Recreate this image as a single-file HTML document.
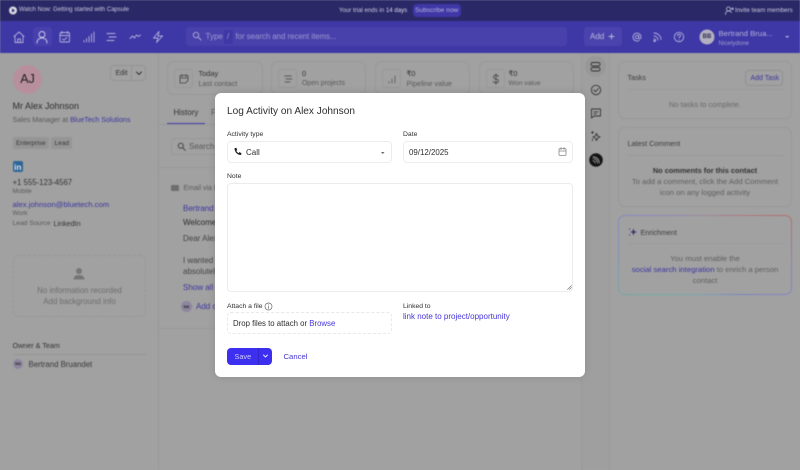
<!DOCTYPE html>
<html><head><meta charset="utf-8"><style>
html,body{margin:0;padding:0}
body{width:800px;height:470px;overflow:hidden;position:relative;background:#a1a1a1;font-family:"Liberation Sans",sans-serif;color:#333}
.t{position:absolute;white-space:nowrap;font-size:8px;line-height:11px}
.b{position:absolute;box-sizing:border-box}
.l{color:#3c35a0}
.g{color:#5a5a5a}
#bg{position:absolute;left:0;top:0;width:800px;height:470px;filter:blur(.5px)}
svg{position:absolute;fill:none;stroke-linecap:round;stroke-linejoin:round}
.card{position:absolute;box-sizing:border-box;border:1px solid #999;border-radius:7px}
.ic{position:absolute;box-sizing:border-box;border:1px solid #999;border-radius:4px;width:19px;height:19px;left:6px;top:7px}
#m{position:absolute;left:215px;top:93px;width:370px;height:284px;background:#fff;border-radius:6px;box-shadow:0 0 8px rgba(0,0,0,.12)}
#mi{position:absolute;left:0;top:0;width:370px;height:284px;filter:blur(.3px)}
#m .t{color:#2e2e2e}
.f{position:absolute;box-sizing:border-box;border:1px solid #ececef;border-radius:4px;background:#fff}
</style></head><body>
<div id="bg">
<div class="b" style="left:0;top:0;width:800px;height:21px;background:#2b2868"></div>
<div class="b" style="left:0;top:21px;width:800px;height:32px;background:#3e37a6"></div>
<div class="b" style="left:33px;top:27px;width:19px;height:19px;background:#4740ad;border-radius:3px"></div>
<svg style="left:9px;top:6px" width="9" height="9"><circle cx="4" cy="4.500" r="4" fill="#d8d8e0"/><path d="M3 2.500l3 2-3 2z" fill="#2b2868"/></svg>
<div class="t" style="left:19px;top:5px;font-size:6.050px;color:#c9c9dc">Watch Now: Getting started with Capsule</div>
<div class="t" style="left:339px;top:5px;font-size:6.100px;color:#c9c9dc">Your trial ends in <span style="color:#dcdcea">14 days</span></div>
<div class="b" style="left:413px;top:4px;width:48px;height:13px;border-radius:4px;background:#3f37a6"></div>
<div class="t" style="left:415px;top:5px;font-size:6.600px;color:#b9b7de">Subscribe now</div>
<svg style="left:725px;top:6px" width="10" height="10" stroke="#c3c3d8" stroke-width=".8"><circle cx="3.500" cy="3" r="2"/><path d="M.5 8.500c0-2.500 1.500-3.500 3-3.500s2.500.5 3 1.500M7.500 1.500v2.500M6.300 2.800h2.400"/></svg>
<div class="t" style="left:735px;top:5px;font-size:6.200px;color:#c9c9dc">Invite team members</div>

<svg style="left:12px;top:29px" width="160" height="16" stroke="#b4b2dc" stroke-width=".9">
<path d="M2 7.500l5-4.500 5 4.500M3 7v6.500h8V7M5.700 13.500v-3.500h2.600v3.500"/>
<circle cx="30" cy="5.500" r="3" stroke="#d2d2ec"/><path d="M25 14c0-3.500 2.200-5 5-5s5 1.500 5 5" stroke="#d2d2ec"/>
<rect x="48" y="3.500" width="9.500" height="9.500" rx="1"/><path d="M48 6.500h9.500M50 2.500v2M55.500 2.500v2M50.500 10l1.500 1.200 2.800-2.700"/>
<path d="M72 13v-1.500M74.500 13v-3.500M77 13v-5.500M79.500 13v-8M82 13V3"/>
<path d="M95 4.500h8M97 8h7M95 11.500h7"/>
<path d="M118 9.500l2.500-2.500 2 2 2-3 2 1.500 2-1.500"/>
<path d="M147 2.500l-5.500 6.500h4.500l-1.500 4.500 6-6.500h-4.500z"/>
</svg>
<div class="b" style="left:186px;top:27px;width:381px;height:19px;border-radius:3px;background:#4841ab"></div>
<div class="b" style="left:224px;top:30px;width:9px;height:14px;border-radius:2px;background:#3e37a6"></div>
<svg style="left:192px;top:31px" width="10" height="10" stroke="#b0aed8" stroke-width=".9"><circle cx="4" cy="4" r="2.700"/><path d="M6 6l3 3"/></svg>
<div class="t" style="left:205.500px;top:31px;font-size:8px;color:#9e9bd0">Type</div>
<div class="t" style="left:227px;top:31px;font-size:8px;color:#9e9bd0">/</div>
<div class="t" style="left:235.500px;top:31px;font-size:7.800px;color:#9e9bd0">for search and recent items...</div>
<div class="b" style="left:584px;top:27px;width:38px;height:19px;border-radius:3px;background:#4a43ae"></div>
<div class="t" style="left:590px;top:31px;font-size:8px;color:#bdbcdc">Add</div>
<svg style="left:607px;top:32px" width="9" height="9" stroke="#bdbcdc" stroke-width=".9"><path d="M4.500 2v5M2 4.500h5"/></svg>
<svg style="left:630px;top:29px" width="66" height="16" stroke="#b4b2dc" stroke-width=".9">
<circle cx="7" cy="8" r="1.700"/><path d="M8.700 6.200v2.600c0 1.400 2.300 1.400 2.300-.8a4 4 0 1 0-1.800 3.400"/>
<path d="M24 4c3.500 0 7 3 7 6.500M24 7c2 0 4 1.800 4 4M24 10c1 0 1.700.8 1.700 1.700"/><circle cx="24.500" cy="12" r=".7"/>
<circle cx="49" cy="8" r="4.700"/><path d="M47.500 6.700c0-2 3-2 3 0 0 1-1.500 1.100-1.500 2.300"/><path d="M49 10.800v.1"/>
</svg>
<svg style="left:699px;top:29px" width="16" height="16"><circle cx="8" cy="8" r="7.500" fill="#b3afc0"/></svg>
<div class="t" style="left:699px;top:32.500px;width:16px;text-align:center;font-size:6px;font-weight:bold;color:#2f2f4d;line-height:9px">BB</div>
<div class="t" style="left:718.500px;top:28px;font-size:7.700px;color:#b4b3da">Bertrand Brua...</div>
<div class="t" style="left:718.500px;top:37.500px;font-size:6.200px;color:#a09ed0">Nicelydone</div>
<svg style="left:784px;top:35px" width="7" height="4"><path d="M1 1h4.500l-2.250 2z" fill="#b0aed8"/></svg>

<div class="b" style="left:158px;top:53px;width:1px;height:417px;background:#999"></div>
<div class="b" style="left:581px;top:53px;width:29px;height:417px;background:#9f9f9f;border-left:1px solid #999;border-right:1px solid #999"></div>

<svg style="left:13px;top:65px" width="29" height="29"><circle cx="14.500" cy="14.500" r="14.500" fill="#b88f9d"/></svg>
<div class="t" style="left:13px;top:72px;width:29px;text-align:center;font-size:12.500px;line-height:15px;color:#222">AJ</div>
<div class="b" style="left:110px;top:65px;width:36px;height:16px;border:1px solid #949494;border-radius:4px"></div>
<div class="b" style="left:131px;top:65px;width:1px;height:16px;background:#949494"></div>
<div class="t" style="left:115.500px;top:67.500px;font-size:7px;color:#333">Edit</div>
<svg style="left:135px;top:71px" width="8" height="5" stroke="#333" stroke-width="1"><path d="M1.500 1l2.500 2.500L6.500 1"/></svg>
<div class="t" style="left:12.500px;top:100px;font-size:9px;line-height:12px;color:#2e2e2e">Mr Alex Johnson</div>
<div class="t g" style="left:12.500px;top:115px;font-size:7.100px">Sales Manager at <span class="l">BlueTech Solutions</span></div>
<div class="b" style="left:13px;top:137px;width:36px;height:12px;background:#959595;border-radius:2px"></div>
<div class="b" style="left:51px;top:137px;width:21px;height:12px;background:#959595;border-radius:2px"></div>
<div class="t" style="left:16px;top:137.500px;font-size:6.500px;color:#3a3a3a">Enterprise</div>
<div class="t" style="left:54.500px;top:137.500px;font-size:6.500px;color:#3a3a3a">Lead</div>
<div class="b" style="left:13px;top:161px;width:10px;height:11px;border-radius:2px;background:#2e6596"></div>
<div class="t" style="left:14px;top:162px;font-size:8.500px;line-height:10px;font-weight:bold;color:#d8e0ea">in</div>
<div class="t" style="left:12.500px;top:177px;font-size:7.800px;color:#333">+1 555-123-4567</div>
<div class="t g" style="left:12.500px;top:186px;font-size:6.500px">Mobile</div>
<div class="t l" style="left:12.500px;top:199px;font-size:7.700px">alex.johnson@bluetech.com</div>
<div class="t g" style="left:12.500px;top:208px;font-size:6.500px">Work</div>
<div class="t g" style="left:12.500px;top:218px;font-size:6.700px">Lead Source</div>
<div class="t" style="left:53.500px;top:218px;font-size:7.200px;color:#333">LinkedIn</div>
<div class="b" style="left:13px;top:255px;width:133px;height:62px;border:1px dashed #979797;border-radius:5px"></div>
<svg style="left:72px;top:267px" width="14" height="14"><circle cx="7" cy="4" r="3" fill="#767676"/><path d="M1.500 12.500c0-3 2.500-4.500 5.500-4.500s5.500 1.500 5.500 4.500z" fill="#767676"/></svg>
<div class="t" style="left:13px;top:285px;width:133px;text-align:center;font-size:7.900px;color:#6d6d6d">No information recorded</div>
<div class="t" style="left:13px;top:296px;width:133px;text-align:center;font-size:7.900px;color:#6d6d6d">Add background info</div>
<div class="t" style="left:12.500px;top:340px;font-size:7.200px;color:#333">Owner &amp; Team</div>
<div class="b" style="left:13px;top:354px;width:133px;height:1px;background:#959595"></div>
<svg style="left:13px;top:359px" width="10" height="10"><circle cx="5" cy="5" r="5" fill="#8e859e"/></svg>
<div class="t" style="left:13px;top:360px;width:10px;text-align:center;font-size:4px;line-height:8px;font-weight:bold;color:#333">BB</div>
<div class="t" style="left:28.500px;top:358.500px;font-size:7.800px;color:#3a3a3a">Bertrand Bruandet</div>

<div class="card" style="left:167px;top:61px;width:96px;height:34px"><div class="ic"></div></div>
<div class="card" style="left:271px;top:61px;width:95px;height:34px"><div class="ic"></div></div>
<div class="card" style="left:375px;top:61px;width:95px;height:34px"><div class="ic"></div></div>
<div class="card" style="left:479px;top:61px;width:95px;height:34px"><div class="ic"></div></div>
<svg style="left:178px;top:73px" width="12" height="12" stroke="#444" stroke-width=".8"><path d="M2 2.500h8v5l-2.500 2.500H2zM2 5h8M4 1.500v2M8 1.500v2"/></svg>
<svg style="left:282px;top:73px" width="12" height="12" stroke="#444" stroke-width=".8"><path d="M2.500 3h7M4 6h6M3 9h5"/></svg>
<svg style="left:386px;top:73px" width="12" height="12" stroke="#555" stroke-width=".8"><path d="M3 10V8.500M6 10V6M9 10V3"/></svg>
<svg style="left:490px;top:73px" width="12" height="12" stroke="#444" stroke-width=".8"><path d="M8.500 3.500C8 2.500 7 2.200 6 2.200c-1.500 0-2.500.8-2.500 1.900 0 2.700 5 1.200 5 3.800 0 1.100-1 1.900-2.500 1.900-1.200 0-2.200-.5-2.700-1.400M6 .8v10.400"/></svg>
<div class="t" style="left:198.500px;top:67.500px;font-size:7.400px;color:#333">Today</div>
<div class="t g" style="left:198.500px;top:77.500px;font-size:7.200px">Last contact</div>
<div class="t" style="left:302px;top:67.500px;font-size:7.400px;color:#333">0</div>
<div class="t g" style="left:302px;top:77.500px;font-size:6.900px">Open projects</div>
<div class="t" style="left:406.500px;top:67.500px;font-size:7.400px;color:#333">₹0</div>
<div class="t g" style="left:406.500px;top:77.500px;font-size:7.300px">Pipeline value</div>
<div class="t" style="left:508.500px;top:67.500px;font-size:7.400px;color:#333">₹0</div>
<div class="t g" style="left:508.500px;top:77.500px;font-size:6.800px">Won value</div>
<div class="t" style="left:173.500px;top:107px;font-size:8px;color:#333">History</div>
<div class="t g" style="left:211px;top:107px;font-size:8px">F</div>
<div class="b" style="left:167px;top:123px;width:38px;height:1px;background:#423ba4"></div>
<div class="b" style="left:159px;top:124px;width:56px;height:1px;background:#999"></div>
<div class="b" style="left:171px;top:138px;width:60px;height:17px;border:1px solid #999;border-radius:4px"></div>
<svg style="left:177px;top:142px" width="9" height="9" stroke="#444" stroke-width="1"><circle cx="3.800" cy="3.800" r="2.500"/><path d="M5.800 5.800l2.500 2.500"/></svg>
<div class="t g" style="left:189px;top:141px;font-size:8px">Search...</div>
<div class="b" style="left:159px;top:167px;width:56px;height:1px;background:#999"></div>
<div class="b" style="left:171px;top:185px;width:8px;height:6px;background:#6f6f6f;border-radius:1px"></div>
<div class="t g" style="left:183.500px;top:183px;font-size:7px">Email via B</div>
<div class="t l" style="left:183px;top:202.500px;font-size:8px">Bertrand</div>
<div class="t" style="left:183px;top:217px;font-size:8px;color:#2b2b2b">Welcome</div>
<div class="t" style="left:183px;top:232.500px;font-size:8px;color:#444">Dear Alex</div>
<div class="t" style="left:183px;top:255px;font-size:8px;color:#444">I wanted</div>
<div class="t" style="left:183px;top:266px;font-size:8px;color:#444">absolutely</div>
<div class="t l" style="left:183px;top:281.500px;font-size:8px">Show all</div>
<svg style="left:181px;top:301px" width="11" height="11"><circle cx="5.500" cy="5.500" r="5.500" fill="#8e859e"/></svg>
<div class="t" style="left:181px;top:302px;width:11px;text-align:center;font-size:4px;line-height:9px;font-weight:bold;color:#333">BB</div>
<div class="t l" style="left:196px;top:301px;font-size:8px">Add c</div>
<div class="b" style="left:159px;top:328px;width:56px;height:1px;background:#999"></div>

<svg style="left:585px;top:56px" width="21" height="21"><circle cx="10.500" cy="10.500" r="10.500" fill="#989898"/></svg>
<svg style="left:590px;top:61px" width="12" height="12" stroke="#333" stroke-width=".9"><rect x="1" y="1.500" width="9" height="3.500" rx="1.700"/><rect x="1" y="6.500" width="9" height="3.500" rx="1.700"/></svg>
<svg style="left:590px;top:84px" width="12" height="12" stroke="#333" stroke-width=".9"><circle cx="6" cy="6" r="4.700"/><path d="M3.800 6l1.700 1.700 3-3.200"/></svg>
<svg style="left:590px;top:107px" width="12" height="12" stroke="#333" stroke-width=".9"><path d="M1.500 2h9v7H4l-2.500 2zM4 4.800h4M4 6.800h2.500"/></svg>
<svg style="left:590px;top:130px" width="12" height="12" stroke="#333" stroke-width=".9"><path d="M6.500 3.500l1.200 2.500 2.500 1-2.500 1-1.200 2.500-1.200-2.500-2.500-1 2.500-1zM2.500 1.500v2M1.500 2.500h2M2.500 9v1.500"/></svg>
<svg style="left:589px;top:153px" width="14" height="14"><circle cx="7" cy="7" r="6.800" fill="#161616"/><path d="M4 5.500c2.500 0 4.500 2 4.500 4.500M4 7.800c1.200 0 2.200 1 2.200 2.200M4 3.800c3.500 0 6.200 2.700 6.200 6.200" stroke="#b5b5b5" stroke-width=".8"/></svg>

<div class="card" style="left:618px;top:61px;width:174px;height:58px"></div>
<div class="t" style="left:627.500px;top:72px;font-size:7.200px;color:#3c3c3c">Tasks</div>
<div class="b" style="left:745px;top:70px;width:38px;height:16px;border:1px solid #919191;border-radius:4px"></div>
<div class="t l" style="left:750.500px;top:72.500px;font-size:7px">Add Task</div>
<div class="b" style="left:627px;top:89px;width:156px;height:1px;background:#9a9a9a"></div>
<div class="t" style="left:618px;top:99px;width:174px;text-align:center;font-size:7.500px;color:#6a6a6a">No tasks to complete.</div>
<div class="card" style="left:618px;top:127px;width:174px;height:80px"></div>
<div class="t" style="left:627.500px;top:138px;font-size:7.200px;color:#3c3c3c">Latest Comment</div>
<div class="b" style="left:627px;top:155px;width:156px;height:1px;background:#9a9a9a"></div>
<div class="t" style="left:618px;top:164.500px;width:174px;text-align:center;font-size:7.400px;font-weight:bold;color:#333">No comments for this contact</div>
<div class="t" style="left:618px;top:176px;width:174px;text-align:center;font-size:7.700px;color:#5f5f5f">To add a comment, click the Add Comment</div>
<div class="t" style="left:618px;top:187px;width:174px;text-align:center;font-size:7.700px;color:#5f5f5f">icon on any logged activity</div>
<div class="b" style="left:618px;top:215px;width:174px;height:80px;border-radius:7px;padding:1px;background:conic-gradient(from 0deg,#a08a9c 0deg,#b56e6e 65deg,#8682c4 105deg,#7c86c2 140deg,#7ba4b4 180deg,#6fb0a0 235deg,#7f93bc 270deg,#8a86c4 300deg,#a08a9c 360deg)"><div style="width:100%;height:100%;border-radius:6px;background:#a1a1a1"></div></div>
<svg style="left:628px;top:227px" width="10" height="10"><path d="M5.500 1.500l.9 2.600 2.600.9-2.600.9-.9 2.600-.9-2.600-2.600-.9 2.600-.9z" fill="#3a2f70"/><circle cx="1.500" cy="2" r=".6" fill="#3a2f70"/><circle cx="1.500" cy="8" r=".6" fill="#3a2f70"/></svg>
<div class="t" style="left:640.500px;top:227px;font-size:7.200px;color:#3c3c3c">Enrichment</div>
<div class="b" style="left:627px;top:243px;width:156px;height:1px;background:#9a9a9a"></div>
<div class="t" style="left:618px;top:253px;width:174px;text-align:center;font-size:7.700px;color:#5f5f5f">You must enable the</div>
<div class="t" style="left:618px;top:264px;width:174px;text-align:center;font-size:7.700px;color:#5f5f5f"><span class="l">social search integration</span> to enrich a person</div>
<div class="t" style="left:618px;top:275px;width:174px;text-align:center;font-size:7.700px;color:#5f5f5f">contact</div>
</div>

<div id="m"><div id="mi">
<div class="t" style="left:12px;top:12px;font-size:10.100px;line-height:14px">Log Activity on Alex Johnson</div>
<div class="t" style="left:12px;top:35.500px;font-size:6.800px">Activity type</div>
<div class="t" style="left:188px;top:35.500px;font-size:6.800px">Date</div>
<div class="f" style="left:12px;top:48px;width:165px;height:22px"></div>
<svg style="left:18px;top:54px" width="9" height="10"><path d="M1.500 1.200l1.800-.4 1 2.200-1 .8c.4 1 1.200 1.900 2.200 2.300l.8-1 2.200 1-.5 1.900C4.500 8 1.500 5 1.500 1.200z" fill="#222"/></svg>
<div class="t" style="left:31px;top:53.500px;font-size:8px">Call</div>
<svg style="left:165px;top:58px" width="6" height="4"><path d="M1 1h3.500L2.750 3z" fill="#666"/></svg>
<div class="f" style="left:188px;top:48px;width:170px;height:22px"></div>
<div class="t" style="left:194px;top:53.500px;font-size:7.900px">09/12/2025</div>
<svg style="left:342px;top:53px" width="11" height="11" stroke="#888" stroke-width=".8"><rect x="2" y="2.500" width="7" height="7" rx="1"/><path d="M2 5h7M4 1.500v2M7 1.500v2"/></svg>
<div class="t" style="left:12px;top:78px;font-size:6.800px">Note</div>
<div class="f" style="left:12px;top:90px;width:346px;height:109px"></div>
<svg style="left:352px;top:192px" width="5" height="5" stroke="#777" stroke-width=".6"><path d="M.5 4.500l4-4M2.500 4.500l2-2"/></svg>
<div class="t" style="left:12px;top:207.500px;font-size:6.800px">Attach a file</div>
<svg style="left:49px;top:208.500px" width="9" height="9" stroke="#666" stroke-width=".7"><circle cx="4.500" cy="4.500" r="3.500"/><path d="M4.500 4v2.500M4.500 2.600v.1"/></svg>
<div class="t" style="left:188px;top:207.500px;font-size:6.800px">Linked to</div>
<div class="b" style="left:12px;top:219px;width:165px;height:22px;border:1px dashed #e8e8ec;border-radius:4px"></div>
<div class="t" style="left:18px;top:224.500px;font-size:7.800px">Drop files to attach or <span style="color:#4535d8">Browse</span></div>
<div class="t" style="left:188px;top:218px;font-size:8px"><span style="color:#4535d8">link note to project/opportunity</span></div>
<div class="b" style="left:12px;top:254.500px;width:45px;height:17px;border-radius:4px;background:#3d2ff0"></div>
<div class="b" style="left:43px;top:254.500px;width:1px;height:17px;background:#3326c8"></div>
<div class="t" style="left:19.500px;top:257.500px;font-size:7.300px"><span style="color:#cfccf8">Save</span></div>
<svg style="left:46.500px;top:260.500px" width="7" height="5" stroke="#e4e2fc" stroke-width="1"><path d="M1.500 1l2 2 2-2"/></svg>
<div class="t" style="left:68.500px;top:257.500px;font-size:7.700px"><span style="color:#4535d8">Cancel</span></div>
</div></div>
</body></html>
